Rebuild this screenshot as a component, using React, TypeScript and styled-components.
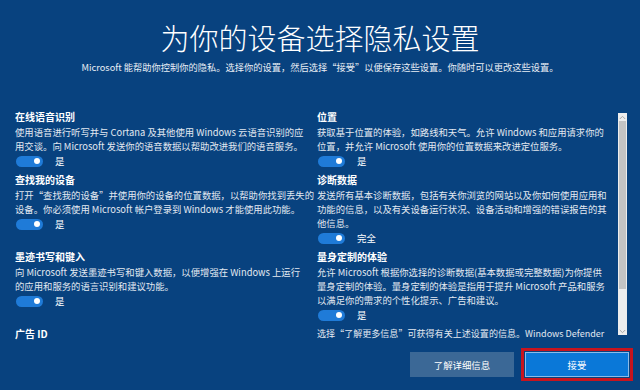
import React from 'react';
import styled, { createGlobalStyle } from 'styled-components';

const GlobalStyle = createGlobalStyle`
  html, body {
    margin: 0;
    padding: 0;
  }
  body {
    font-family: "Noto Sans CJK SC", "Noto Sans", sans-serif;
    background: #08427f;
  }
`;

type Setting = {
  title: string;
  lines: string[];
  toggle?: string;
};

const leftSettings: Setting[] = [
  {
    title: '在线语音识别',
    lines: [
      '使用语音进行听写并与 Cortana 及其他使用 Windows 云语音识别的应',
      '用交谈。向 Microsoft 发送你的语音数据以帮助改进我们的语音服务。',
    ],
    toggle: '是',
  },
  {
    title: '查找我的设备',
    lines: [
      '打开“查找我的设备”并使用你的设备的位置数据，以帮助你找到丢失的',
      '设备。你必须使用 Microsoft 帐户登录到 Windows 才能使用此功能。',
    ],
    toggle: '是',
  },
  {
    title: '墨迹书写和键入',
    lines: [
      '向 Microsoft 发送墨迹书写和键入数据，以便增强在 Windows 上运行',
      '的应用和服务的语言识别和建议功能。',
    ],
    toggle: '是',
  },
  {
    title: '广告 ID',
    lines: [],
  },
];

const rightSettings: Setting[] = [
  {
    title: '位置',
    lines: [
      '获取基于位置的体验，如路线和天气。允许 Windows 和应用请求你的',
      '位置，并允许 Microsoft 使用你的位置数据来改进定位服务。',
    ],
    toggle: '是',
  },
  {
    title: '诊断数据',
    lines: [
      '发送所有基本诊断数据，包括有关你浏览的网站以及你如何使用应用和',
      '功能的信息，以及有关设备运行状况、设备活动和增强的错误报告的其',
      '他信息。',
    ],
    toggle: '完全',
  },
  {
    title: '量身定制的体验',
    lines: [
      '允许 Microsoft 根据你选择的诊断数据(基本数据或完整数据)为你提供',
      '量身定制的体验。量身定制的体验是指用于提升 Microsoft 产品和服务',
      '以满足你的需求的个性化提示、广告和建议。',
    ],
    toggle: '是',
  },
];

const App: React.FC = () => {
  const rows = leftSettings.map((left, index) => [left, rightSettings[index]] as const);

  const renderSetting = (setting: Setting, key: string) => (
    <Item key={key}>
      <ItemTitle>{setting.title}</ItemTitle>
      {setting.lines.map((line, index) => (
        <Line key={`${key}-line-${index}`}>{line}</Line>
      ))}
      {setting.toggle && (
        <ToggleRow>
          <Toggle>
            <Knob />
          </Toggle>
          <ToggleLabel>{setting.toggle}</ToggleLabel>
        </ToggleRow>
      )}
    </Item>
  );

  return (
    <Page>
      <GlobalStyle />
      <Header>
        <Title>为你的设备选择隐私设置</Title>
        <Subtitle>
          Microsoft 能帮助你控制你的隐私。选择你的设置，然后选择“接受”以便保存这些设置。你随时可以更改这些设置。
        </Subtitle>
      </Header>
      <Body>
        <Viewport>
          {rows.map(([left, right], index) => (
            <React.Fragment key={`row-${index}`}>
              {renderSetting(left, `left-${index}`)}
              {right ? (
                renderSetting(right, `right-${index}`)
              ) : (
                <Note>选择“了解更多信息”可获得有关上述设置的信息。Windows Defender</Note>
              )}
            </React.Fragment>
          ))}
        </Viewport>
        <Scrollbar>
          <ScrollArrow>
            <svg width="7" height="5" viewBox="0 0 7 5">
              <path d="M0.8 4 L3.5 1.3 L6.2 4" fill="none" stroke="#a6a6a6" strokeWidth="1" />
            </svg>
          </ScrollArrow>
          <ScrollTrack>
            <ScrollThumb />
          </ScrollTrack>
          <ScrollArrow>
            <svg width="7" height="5" viewBox="0 0 7 5">
              <path d="M0.8 1 L3.5 3.7 L6.2 1" fill="none" stroke="#a6a6a6" strokeWidth="1" />
            </svg>
          </ScrollArrow>
        </Scrollbar>
      </Body>
      <Footer>
        <Button $variant="secondary">了解详细信息</Button>
        <Highlight>
          <Button $variant="primary">接受</Button>
        </Highlight>
      </Footer>
    </Page>
  );
};

const Page = styled.div`
  width: 640px;
  height: 390px;
  overflow: hidden;
  background: #08427f;
  color: #ffffff;
  display: flex;
  flex-direction: column;
`;

const Header = styled.div`
  padding-top: 17px;
  text-align: center;
`;

const Title = styled.h1`
  margin: 0;
  font-size: 29px;
  line-height: 40px;
  font-weight: 300;
  color: #ffffff;
`;

const Subtitle = styled.p`
  margin: 3px 0 0;
  font-size: 9.25px;
  line-height: 14px;
  color: #e8eef5;
  white-space: nowrap;
`;

const Body = styled.div`
  display: flex;
  margin-top: 35px;
  height: 233px;
  padding-left: 15px;
`;

const Viewport = styled.div`
  flex: 1;
  overflow: hidden;
  display: grid;
  grid-template-columns: 290px 293px;
  grid-auto-rows: auto;
  column-gap: 12px;
  align-content: start;
  align-items: start;
`;

const Item = styled.div`
  display: flex;
  flex-direction: column;
  padding-bottom: 4px;
`;

const ItemTitle = styled.div`
  font-size: 10px;
  line-height: 16px;
  font-weight: 700;
  color: #ffffff;
`;

const Line = styled.div`
  font-size: 9.35px;
  line-height: 14px;
  color: #e3e9f1;
  white-space: nowrap;
`;

const Note = styled(Line)`
  font-size: 9.05px;
  margin-top: 1px;
`;

const ToggleRow = styled.div`
  display: flex;
  align-items: center;
  gap: 12px;
  height: 14px;
  margin-top: 1px;
  padding-left: 1px;
`;

const Toggle = styled.span`
  width: 27px;
  height: 11px;
  box-sizing: border-box;
  border-radius: 6px;
  background: #1f7bd8;
  display: inline-flex;
  align-items: center;
  justify-content: flex-end;
  padding-right: 3px;
`;

const Knob = styled.span`
  width: 6px;
  height: 6px;
  border-radius: 50%;
  background: #ffffff;
`;

const ToggleLabel = styled.span`
  font-size: 9.4px;
  line-height: 14px;
  color: #ffffff;
`;

const Scrollbar = styled.div`
  width: 9px;
  margin: 4px 13px 7px 8px;
  background: #eeeeee;
  display: flex;
  flex-direction: column;
`;

const ScrollArrow = styled.div`
  height: 8px;
  display: flex;
  align-items: center;
  justify-content: center;
`;

const ScrollTrack = styled.div`
  flex: 1;
  display: flex;
  flex-direction: column;
  padding-bottom: 38px;
`;

const ScrollThumb = styled.div`
  flex: 1;
  margin: 0 1px;
  background: #c4c4c4;
`;

const Footer = styled.div`
  display: flex;
  justify-content: flex-end;
  align-items: center;
  gap: 7px;
  margin-top: 6px;
  padding-right: 7px;
`;

const Highlight = styled.div`
  border: 3px solid #c8141e;
  padding: 1px;
  display: flex;
`;

const Button = styled.button<{ $variant: 'primary' | 'secondary' }>`
  width: 104px;
  height: 25px;
  box-sizing: border-box;
  font-family: "Noto Sans CJK SC", "Noto Sans", sans-serif;
  font-size: 9.4px;
  color: #ffffff;
  cursor: pointer;
  background: ${({ $variant }) => ($variant === 'primary' ? '#0a78d8' : '#3b6896')};
  border: ${({ $variant }) => ($variant === 'primary' ? '1px solid #8cbbe8' : '1px solid #3b6896')};
  padding: 0;
`;

export default App;
